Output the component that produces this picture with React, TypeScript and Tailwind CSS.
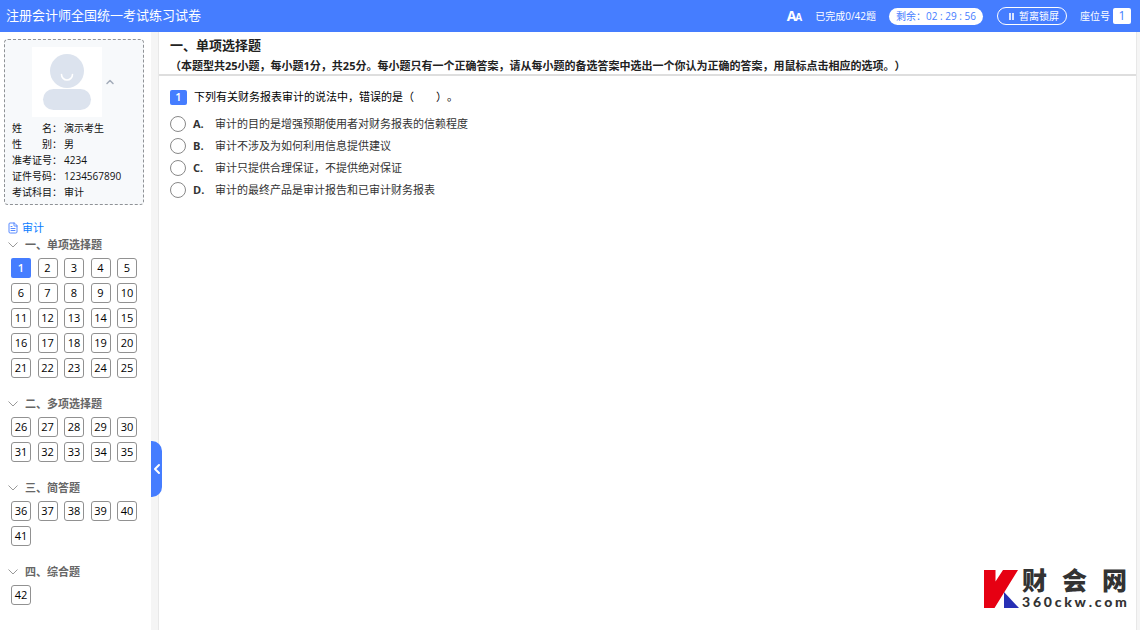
import { useState } from 'react';
import { ChevronLeft, ChevronUp, FileText } from 'lucide-react';

const candidate = [
  { label: '姓\u3000\u3000名：', value: '演示考生' },
  { label: '性\u3000\u3000别：', value: '男' },
  { label: '准考证号：', value: '4234' },
  { label: '证件号码：', value: '1234567890' },
  { label: '考试科目：', value: '审计' },
];

const sections = [
  { title: '一、单项选择题', from: 1, to: 25 },
  { title: '二、多项选择题', from: 26, to: 35 },
  { title: '三、简答题', from: 36, to: 41 },
  { title: '四、综合题', from: 42, to: 42 },
];

const options = [
  { key: 'A', text: '审计的目的是增强预期使用者对财务报表的信赖程度' },
  { key: 'B', text: '审计不涉及为如何利用信息提供建议' },
  { key: 'C', text: '审计只提供合理保证，不提供绝对保证' },
  { key: 'D', text: '审计的最终产品是审计报告和已审计财务报表' },
];

function Header() {
  return (
    <header className="flex h-8 shrink-0 items-center justify-between bg-[#457dff] pl-[6px] pr-[9px] text-white">
      <h1 className="text-[13px]">注册会计师全国统一考试练习试卷</h1>
      <div className="flex items-center text-[10px]">
        <button aria-label="字体大小" className="mr-[13px] flex items-baseline font-bold leading-4">
          <span className="text-[14px]">A</span>
          <span className="-ml-px text-[10px]">A</span>
        </button>
        <span className="mr-[13px]">已完成0/42题</span>
        <span className="mr-[14px] flex h-[17px] items-center rounded-full bg-white px-[7px] text-[#457dff]">
          剩余：02 : 29 : 56
        </span>
        <button className="mr-[13px] flex h-[18px] items-center gap-[5px] rounded-full border border-white pl-[11px] pr-[7px]">
          <span className="flex gap-px">
            <i className="h-[7px] w-[2px] bg-white/80" />
            <i className="h-[7px] w-[2px] bg-white/80" />
          </span>
          暂离锁屏
        </button>
        <span>座位号</span>
        <span className="ml-[3px] flex h-4 w-[18px] items-center justify-center rounded-[2px] bg-white text-[12px] text-[#457dff]">
          1
        </span>
      </div>
    </header>
  );
}

function Avatar() {
  return (
    <svg viewBox="0 0 70 70" className="size-[70px] bg-white">
      <circle cx="35" cy="24" r="17" fill="#dce3ee" />
      <rect x="11" y="42" width="48" height="21" rx="10.5" fill="#dce3ee" />
      <path d="M29.5 27.5a5.5 5.5 0 0 0 11 0" fill="none" stroke="#fff" strokeWidth="1.6" strokeLinecap="round" />
    </svg>
  );
}

function CandidateCard() {
  return (
    <div className="ml-1 mr-[7px] rounded-[4px] border border-dashed border-[#8f9296] bg-[#f7f9fb] pb-1 pl-[7px] pt-[7px]">
      <div className="flex items-center gap-[2px] pl-5">
        <Avatar />
        <button aria-label="收起">
          <ChevronUp className="size-3 text-[#a3acb9]" strokeWidth={3} />
        </button>
      </div>
      <dl className="mt-[3px] text-[10px] leading-4 text-[#111]">
        {candidate.map((row) => (
          <div key={row.label} className="flex">
            <dt className="w-[52px]">{row.label}</dt>
            <dd>{row.value}</dd>
          </div>
        ))}
      </dl>
    </div>
  );
}

function Sidebar({ current, onSelect }: { current: number; onSelect: (n: number) => void }) {
  return (
    <aside className="w-[151px] shrink-0 bg-white pt-[7px]">
      <CandidateCard />
      <div className="mt-[14px] flex h-[18px] items-center gap-[3px] pl-[7px] text-[11px] text-[#0a7cff]">
        <FileText className="size-3 text-[#457dff]" strokeWidth={1.8} />
        审计
      </div>
      <nav>
        {sections.map((section) => (
          <section key={section.title} className="mb-[18px]">
            <h2 className="mb-[5px] flex h-4 items-center gap-[7px] pl-2 text-[11px] font-bold text-[#666]">
              <svg viewBox="0 0 10 6" className="h-[6px] w-[10px]" fill="none" stroke="#999">
                <path d="M.5.5 5 5 9.5.5" />
              </svg>
              {section.title}
            </h2>
            <div className="ml-[11px] mr-[14px] grid grid-cols-[repeat(5,20px)] justify-between gap-y-[5px]">
              {Array.from({ length: section.to - section.from + 1 }, (_, i) => section.from + i).map((n) => (
                <button
                  key={n}
                  onClick={() => onSelect(n)}
                  className={
                    n === current
                      ? 'h-5 rounded-[2px] bg-[#457dff] text-[11px] font-semibold text-white'
                      : 'h-5 rounded-[3px] border border-[#919191] text-[11px] leading-4 text-black'
                  }
                >
                  {n}
                </button>
              ))}
            </div>
          </section>
        ))}
      </nav>
    </aside>
  );
}

function Logo() {
  return (
    <div className="absolute bottom-[21px] right-[9px] flex items-center gap-[3px] text-[#333]">
      <svg viewBox="0 0 35 38" className="h-[38px] w-[35px]">
        <path d="M0 0h11.5v11.5L19 0h15L10.5 38H0z" fill="#e60012" />
        <path d="M20 22v16h15z" fill="#272fb5" />
      </svg>
      <div className="w-[105px]">
        <div className="flex justify-between font-['Liberation_Sans','Noto_Sans_CJK_SC',sans-serif] text-[25px] font-black leading-[26px]">
          <span>财</span>
          <span>会</span>
          <span>网</span>
        </div>
        <div className="mt-px flex justify-between font-['Lato','Liberation_Sans',sans-serif] text-[14px] font-black leading-[14px]">
          {[...'360ckw.com'].map((c, i) => (
            <span key={i}>{c}</span>
          ))}
        </div>
      </div>
    </div>
  );
}

function Question() {
  const [answer, setAnswer] = useState('');

  return (
    <main className="relative min-w-0 flex-1 border-x border-[#e8e8e8] bg-white [text-spacing-trim:space-all]">
      <div className="border-b-2 border-[#dedede] pl-[11px] pt-[3px] text-[#222]">
        <h2 className="text-[13px] font-bold leading-5">一、单项选择题</h2>
        <p className="pt-[3px] text-[11px] font-bold leading-4">
          （本题型共25小题，每小题1分，共25分。每小题只有一个正确答案，请从每小题的备选答案中选出一个你认为正确的答案，用鼠标点击相应的选项。）
        </p>
      </div>
      <fieldset className="pl-[11px] pt-[13px]">
        <legend className="float-left flex items-center gap-[7px] text-[11px] leading-4 text-black">
          <span className="flex h-[15px] w-[17px] items-center justify-center rounded-[2px] bg-[#457dff] font-semibold text-white">
            1
          </span>
          下列有关财务报表审计的说法中，错误的是（&emsp;&emsp;）。
        </legend>
        <div className="clear-both pt-2">
          {options.map((option) => (
            <label key={option.key} className="flex h-[22px] items-center text-[11px] text-[#333]">
              <input
                type="radio"
                name="answer"
                value={option.key}
                checked={answer === option.key}
                onChange={() => setAnswer(option.key)}
                className="mr-[7px] size-4 appearance-none rounded-full border border-[#888] checked:border-4 checked:border-[#457dff]"
              />
              <span className="w-[22px] font-bold">{option.key}.</span>
              {option.text}
            </label>
          ))}
        </div>
      </fieldset>
      <Logo />
    </main>
  );
}

export default function App() {
  const [current, setCurrent] = useState(1);
  const [open, setOpen] = useState(true);

  return (
    <div className="flex min-h-screen flex-col bg-[#f5f5f5] font-['Open_Sans','Noto_Sans_CJK_SC',sans-serif]">
      <Header />
      <div className="flex flex-1 pr-[3px]">
        {open && <Sidebar current={current} onSelect={setCurrent} />}
        <div className="relative w-[7px] shrink-0">
          {/* Collapse handle */}
          <button
            aria-label="收起侧栏"
            onClick={() => setOpen(!open)}
            className="absolute left-0 top-[409px] z-10 flex h-14 w-[11px] items-center justify-center rounded-r-[10px] bg-[#457dff] text-white"
          >
            <ChevronLeft className="size-4 shrink-0" strokeWidth={3} />
          </button>
        </div>
        <Question />
      </div>
    </div>
  );
}
